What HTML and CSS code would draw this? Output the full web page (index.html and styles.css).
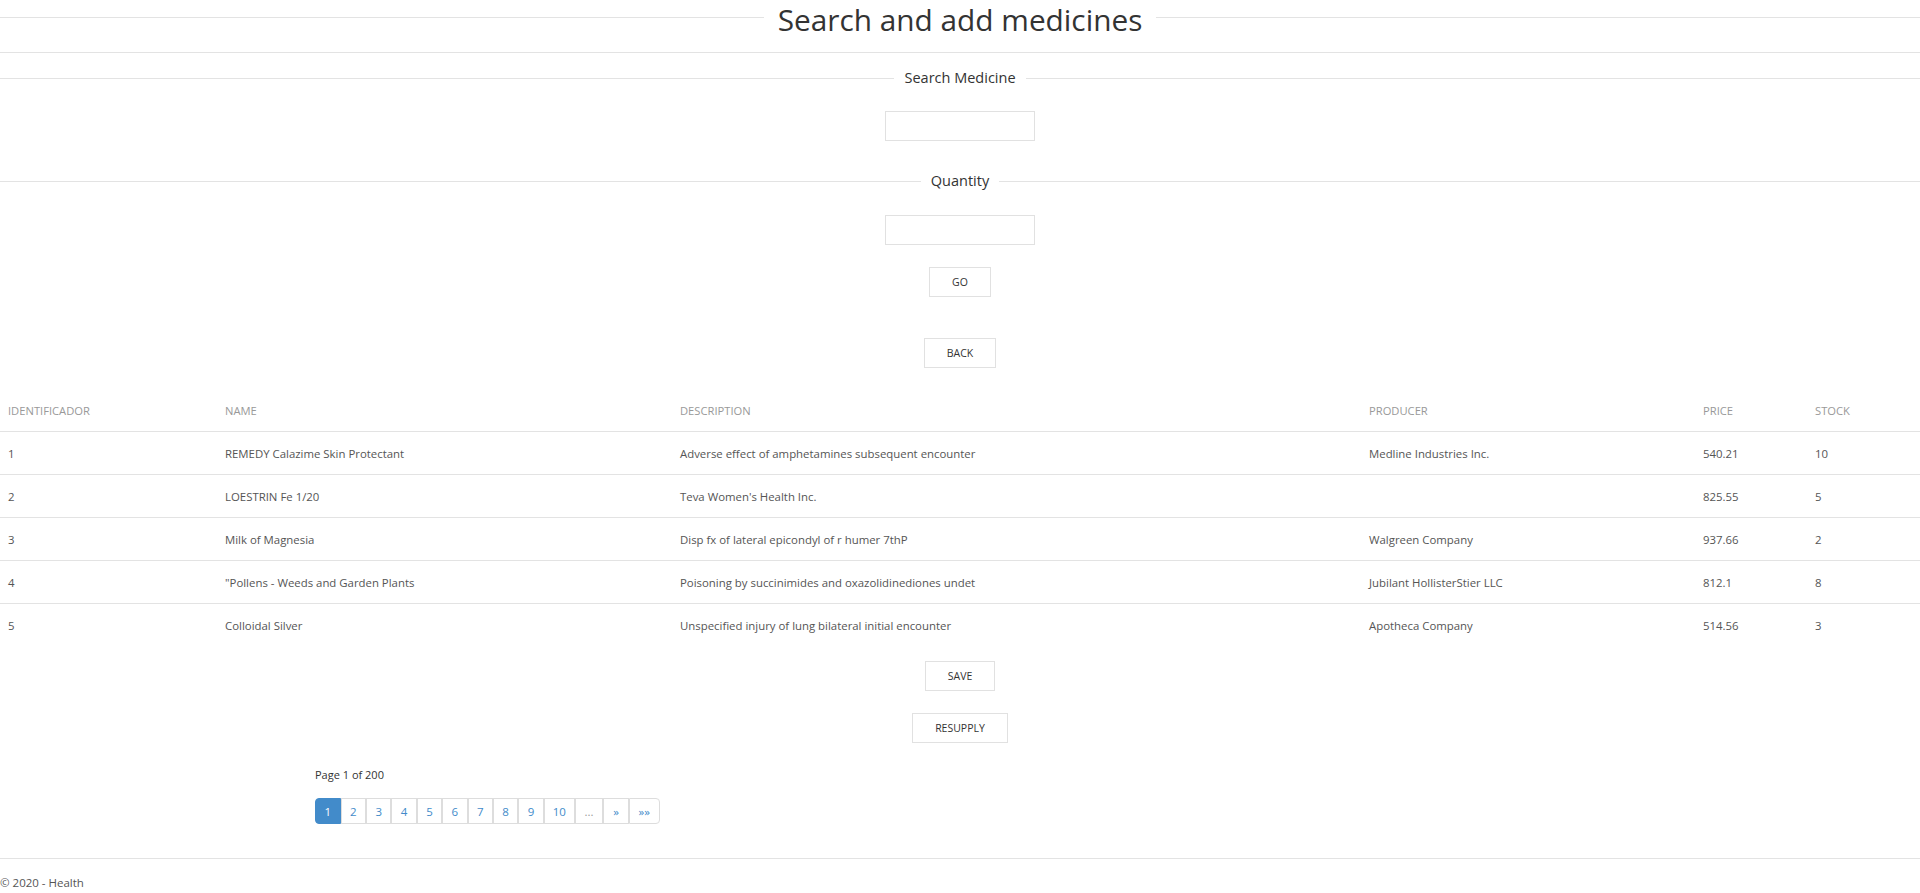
FILE: index.html
```html
<!DOCTYPE html>
<html lang="en">
<head>
<meta charset="utf-8">
<title>Search and add medicines</title>
<link rel="stylesheet" href="styles.css">
</head>
<body>
<div class="page">
  <div class="divider-title">
    <h1 class="title">Search and add medicines</h1>
  </div>
  <hr class="rule rule-top">

  <div class="divider-label label-search"><span>Search Medicine</span></div>
  <div class="center"><input class="field field-search" type="text"></div>

  <div class="divider-label label-qty"><span>Quantity</span></div>
  <div class="center"><input class="field field-qty" type="text"></div>

  <div class="center btn-go-row"><button class="btn">GO</button></div>
  <div class="center btn-back-row"><button class="btn">BACK</button></div>

  <table class="grid">
    <colgroup>
      <col class="c1"><col class="c2"><col class="c3"><col class="c4"><col class="c5"><col class="c6">
    </colgroup>
    <thead>
      <tr><th>IDENTIFICADOR</th><th>NAME</th><th>DESCRIPTION</th><th>PRODUCER</th><th>PRICE</th><th>STOCK</th></tr>
    </thead>
    <tbody>
      <tr><td>1</td><td>REMEDY Calazime Skin Protectant</td><td>Adverse effect of amphetamines subsequent encounter</td><td>Medline Industries Inc.</td><td>540.21</td><td>10</td></tr>
      <tr><td>2</td><td>LOESTRIN Fe 1/20</td><td>Teva Women's Health Inc.</td><td></td><td>825.55</td><td>5</td></tr>
      <tr><td>3</td><td>Milk of Magnesia</td><td>Disp fx of lateral epicondyl of r humer 7thP</td><td>Walgreen Company</td><td>937.66</td><td>2</td></tr>
      <tr><td>4</td><td>"Pollens - Weeds and Garden Plants</td><td>Poisoning by succinimides and oxazolidinediones undet</td><td>Jubilant HollisterStier LLC</td><td>812.1</td><td>8</td></tr>
      <tr><td>5</td><td>Colloidal Silver</td><td>Unspecified injury of lung bilateral initial encounter</td><td>Apotheca Company</td><td>514.56</td><td>3</td></tr>
    </tbody>
  </table>

  <div class="center btn-save-row"><button class="btn">SAVE</button></div>
  <div class="center btn-resupply-row"><button class="btn">RESUPPLY</button></div>

  <div class="pager-block">
    <div class="page-info">Page 1 of 200</div>
    <ul class="pagination">
      <li class="active"><a>1</a></li>
      <li><a>2</a></li>
      <li><a>3</a></li>
      <li><a>4</a></li>
      <li><a>5</a></li>
      <li><a>6</a></li>
      <li><a>7</a></li>
      <li><a>8</a></li>
      <li><a>9</a></li>
      <li><a class="wide">10</a></li>
      <li class="muted"><a class="wider">...</a></li>
      <li><a>»</a></li>
      <li><a class="wide">»»</a></li>
    </ul>
  </div>

  <hr class="rule rule-footer">
  <footer class="footer">© 2020 - Health</footer>
</div>
</body>
</html>
```

FILE: styles.css
```css
html, body {
  margin: 0;
  padding: 0;
  background: #fff;
}

body {
  font-family: "Open Sans", "Noto Sans", sans-serif;
  color: #333;
  font-size: 12px;
}

.page {
  display: flex;
  flex-direction: column;
}

.divider-title,
.divider-label {
  display: flex;
  align-items: center;
}

.divider-title::before,
.divider-title::after,
.divider-label::before,
.divider-label::after {
  content: "";
  flex: 1;
  border-top: 1px solid #e3e3e3;
}

.divider-title {
  height: 40px;
  align-items: flex-start;
}

.divider-title::before,
.divider-title::after {
  margin-top: 17px;
}

.title {
  margin: 0;
  padding: 0 14px;
  font-weight: 400;
  font-size: 29.8px;
  line-height: 40px;
  color: #333;
}

.rule {
  border: 0;
  border-top: 1px solid #e3e3e3;
  margin: 0;
  width: 100%;
}

.rule-top {
  margin-top: 12px;
}

.divider-label {
  height: 20px;
}

.divider-label span {
  padding: 0 10px;
  font-size: 14.5px;
  line-height: 20px;
  color: #333;
}

.label-search {
  margin-top: 15px;
}

.label-qty {
  margin-top: 30px;
}

.center {
  display: flex;
  justify-content: center;
}

.field {
  box-sizing: border-box;
  width: 150px;
  height: 30px;
  border: 1px solid #e1e1e1;
  border-radius: 0;
  outline: none;
  background: #fff;
}

.field-search {
  margin-top: 23px;
}

.field-qty {
  margin-top: 24px;
}

.btn {
  box-sizing: border-box;
  height: 30px;
  padding: 0 22px;
  border: 1px solid #e1e1e1;
  background: #fff;
  color: #333;
  font-family: "Open Sans", "Noto Sans", sans-serif;
  font-size: 10.5px;
  border-radius: 0;
}

.btn-go-row { margin-top: 22px; }
.btn-back-row { margin-top: 41px; }
.btn-save-row { margin-top: 15px; }
.btn-resupply-row { margin-top: 22px; }

.grid {
  margin-top: 22px;
  width: 100%;
  border-collapse: collapse;
  table-layout: fixed;
}

.c1 { width: 217px; }
.c2 { width: 455px; }
.c3 { width: 689px; }
.c4 { width: 334px; }
.c5 { width: 112px; }
.c6 { width: 113px; }

.grid th {
  height: 41px;
  padding: 0 8px;
  text-align: left;
  font-weight: 400;
  font-size: 11.2px;
  color: #999;
  border-bottom: 1px solid #e3e3e3;
}

.grid td {
  height: 42px;
  padding: 0 8px;
  font-size: 11.4px;
  color: #555;
  border-top: 1px solid #e3e3e3;
}

.grid tbody tr:first-child td {
  border-top: 0;
}

.pager-block {
  margin-left: 315px;
  margin-top: 22px;
}

.page-info {
  line-height: 20px;
  font-size: 11px;
  color: #333;
}

.pagination {
  display: flex;
  list-style: none;
  margin: 13px 0 0;
  padding: 0;
}

.pagination a {
  box-sizing: border-box;
  display: flex;
  align-items: center;
  justify-content: center;
  width: 25.4px;
  height: 26px;
  border: 1px solid #ddd;
  color: #428bca;
  font-size: 11.5px;
  background: #fff;
}

.pagination li:first-child a {
  border-top-left-radius: 4px;
  border-bottom-left-radius: 4px;
}

.pagination li:last-child a {
  border-top-right-radius: 4px;
  border-bottom-right-radius: 4px;
}

.pagination a.wide { width: 31px; }
.pagination a.wider { width: 28.6px; }

.pagination .active a {
  background: #428bca;
  border-color: #428bca;
  color: #fff;
  width: 25.6px;
}

.pagination .muted a {
  color: #999;
}

.rule-footer {
  margin-top: 34px;
}

.footer {
  margin-top: 14px;
  line-height: 20px;
  font-size: 11.5px;
  color: #555;
}
```
